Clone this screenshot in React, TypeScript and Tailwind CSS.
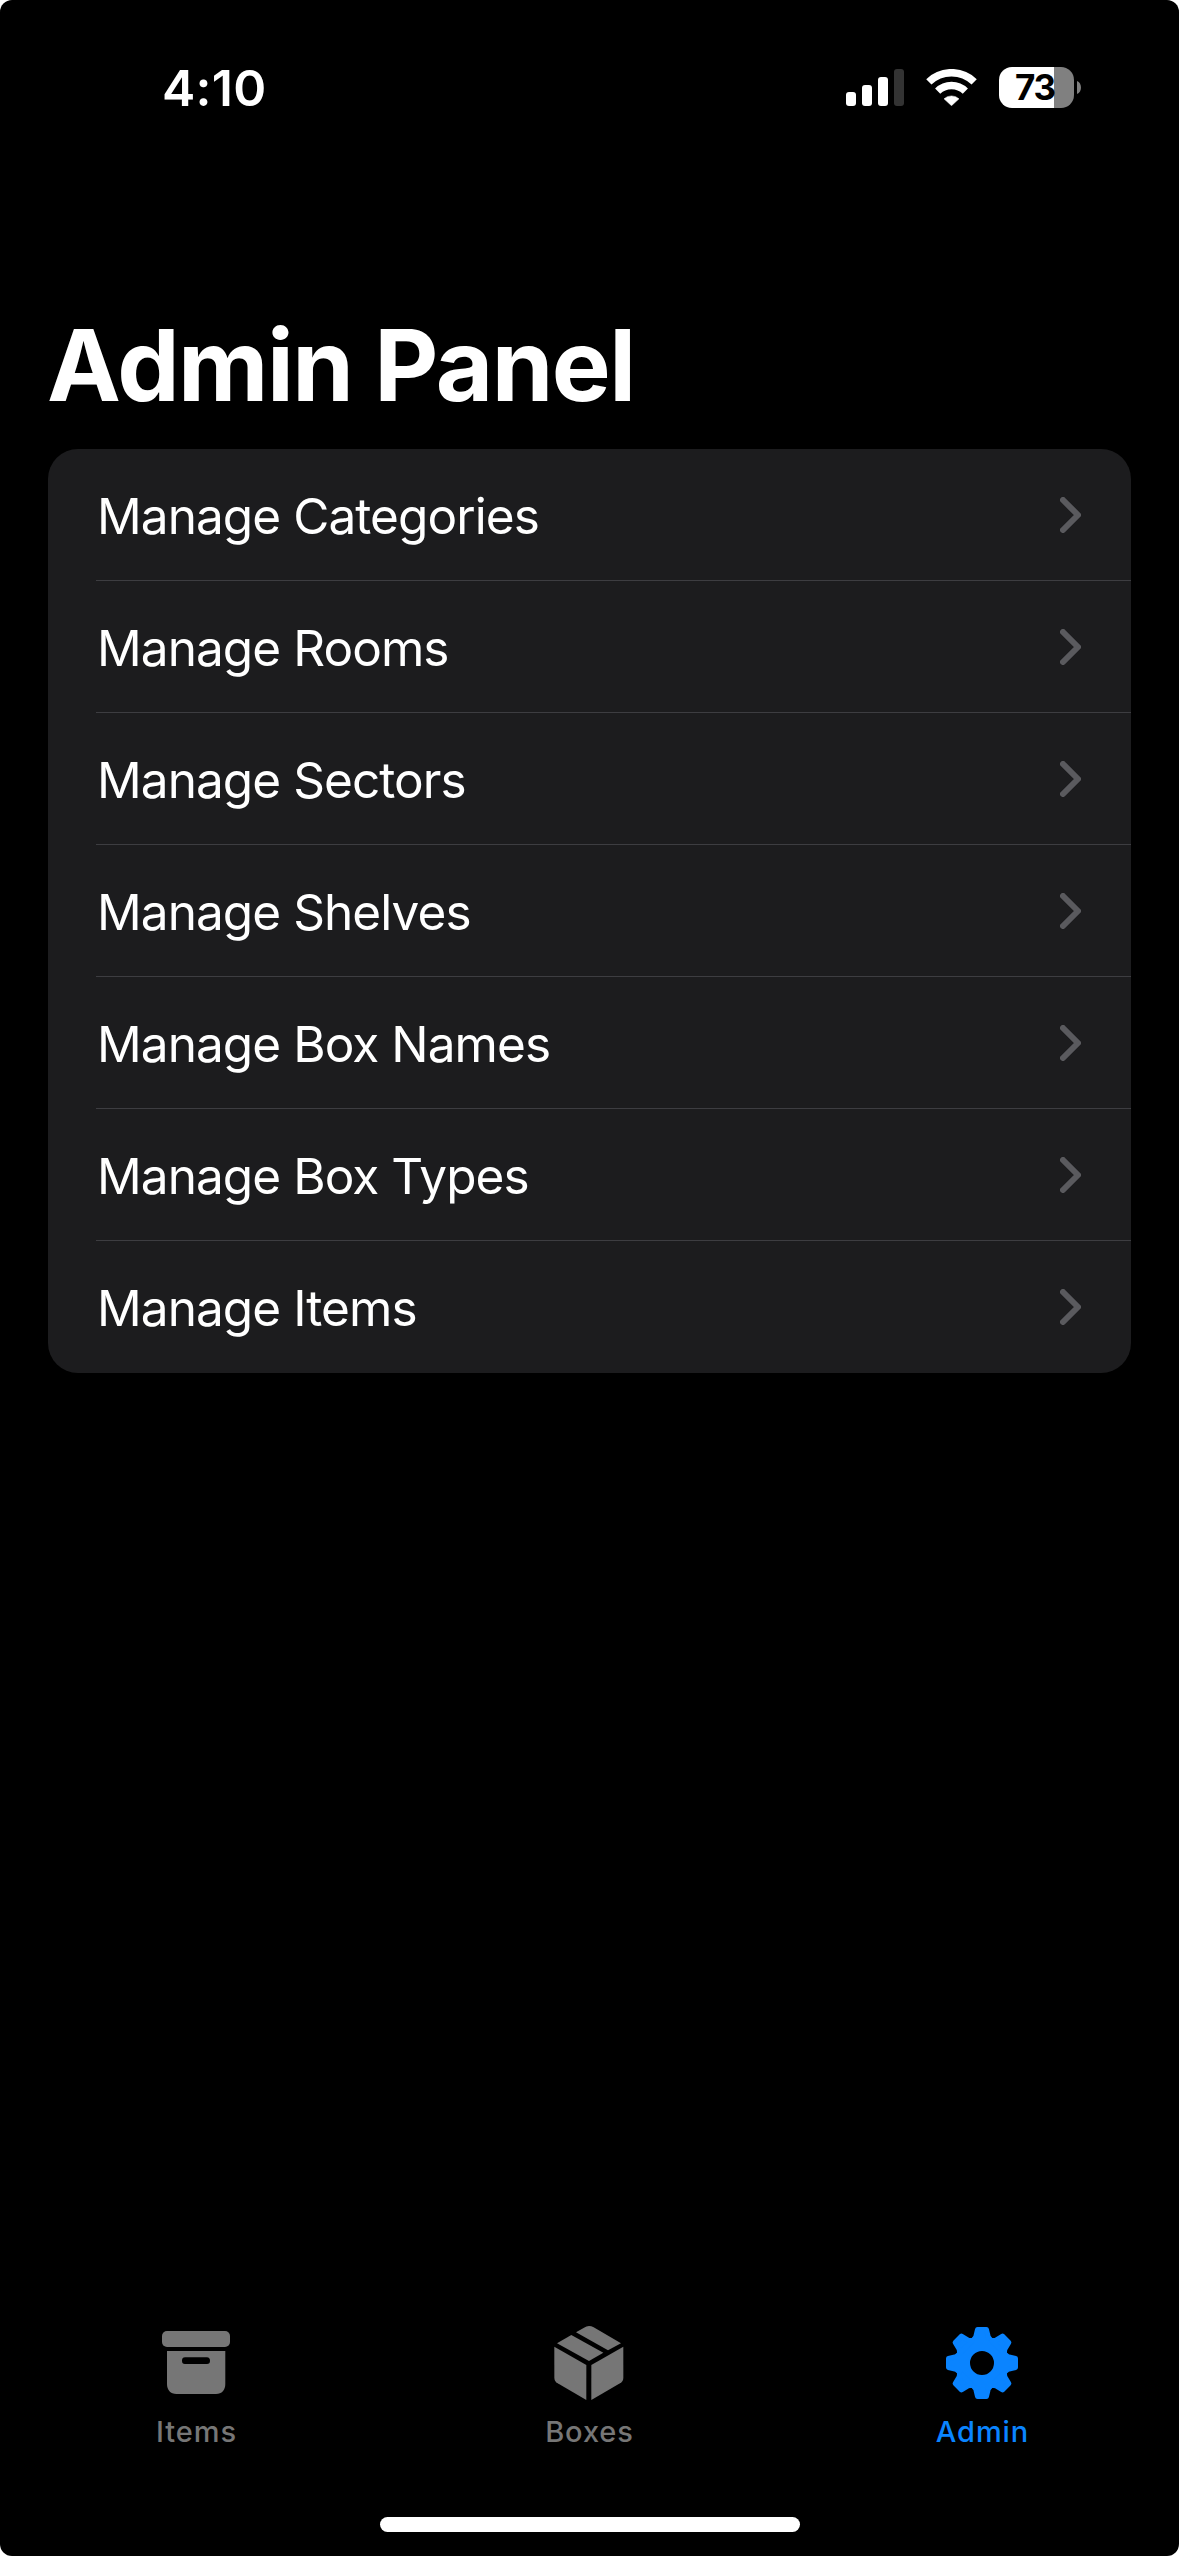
import type { ReactNode } from "react";

const menu = [
  "Manage Categories",
  "Manage Rooms",
  "Manage Sectors",
  "Manage Shelves",
  "Manage Box Names",
  "Manage Box Types",
  "Manage Items",
];

function SignalIcon() {
  return (
    <svg className="mt-[69px] h-[37px] w-[58px]" viewBox="0 0 58 37" fill="#fff">
      <rect x="0" y="23" width="10" height="14" rx="3" />
      <rect x="16" y="16" width="10" height="21" rx="3" />
      <rect x="32" y="8" width="10" height="29" rx="3" />
      <rect x="48" y="0" width="10" height="37" rx="3" fill="#333" />
    </svg>
  );
}

function WifiIcon() {
  return (
    <svg className="mt-[69px] ml-[22px] h-[37px] w-[51px]" viewBox="288 57 153 111" fill="none" stroke="#fff">
      <path d="M296.5 95.5A98 98 0 0 1 432.500 95.500" strokeWidth="22.500" />
      <path d="M323 123.500A59 59 0 0 1 406 123.500" strokeWidth="22" />
      <path d="M342 146.500A33 33 0 0 1 387 146.500L364.500 167Z" fill="#fff" strokeWidth="1.500" strokeLinejoin="round" />
    </svg>
  );
}

function Battery() {
  return (
    <div className="mt-[67px] ml-[22px] flex h-[41px] items-center">
      <div className="flex h-[41px] w-[75px] items-center justify-center rounded-[13px] bg-[linear-gradient(to_right,#fff_55px,#808080_55px)] pr-[3px] text-[35px] leading-[41px] font-bold tracking-[-1.3px] text-black">
        73
      </div>
      <svg className="ml-[3px] h-[13px] w-[4px]" viewBox="0 0 4 13">
        <path d="M0 0C5.300 2 5.300 11 0 13Z" fill="#808080" />
      </svg>
    </div>
  );
}

function Chevron() {
  return (
    <svg className="h-[36px] w-[21px]" viewBox="0 0 21 36" fill="none" stroke="#5a5a5e" strokeWidth="6" strokeLinecap="round" strokeLinejoin="round">
      <path d="M3 3L18 18L3 33" />
    </svg>
  );
}

function ArchiveIcon() {
  return (
    <svg className="h-[76px] w-[76px]" viewBox="0 0 76 76" fill="#767676">
      <rect x="4" y="6" width="68" height="16" rx="5" />
      <path
        fillRule="evenodd"
        d="M9 26H67.300V59C67.300 65 64 69 58 69H18.500C12.500 69 9 65 9 59ZM27 32.300Q24 32.300 24 35.700T27 39H49Q52 39 52 35.700T49 32.300Z"
      />
    </svg>
  );
}

function BoxIcon() {
  return (
    <svg className="h-[76px] w-[76px]" viewBox="62 45 228 228" fill="#767676">
      <path d="M72 110L168 165V270L82 220Q72 214 72 203Z" />
      <path d="M279 110L183 165V270L269 220Q279 214 279 203Z" />
      <path d="M80 100L123 75L219 128L176 153Z" />
      <path d="M137 67L161 53Q175 44 190 52L272 100L233 121Z" />
    </svg>
  );
}

function GearIcon() {
  return (
    <svg className="h-[76px] w-[76px]" viewBox="-38 -38 76 76" fill="#0a84ff" stroke="#0a84ff">
      <circle r="19.500" fill="none" strokeWidth="15" />
      {[0, 45, 90, 135, 180, 225, 270, 315].map((angle) => (
        <path
          key={angle}
          transform={`rotate(${angle})`}
          d="M-9 -22.500L-6.300 -26L-4.500 -33.500H4.500L6.300 -26L9 -22.500Z"
          strokeWidth="5"
          strokeLinejoin="round"
        />
      ))}
    </svg>
  );
}

function Tab({ label, active, children }: { label: string; active?: boolean; children: ReactNode }) {
  return (
    <div className={`flex flex-1 flex-col items-center ${active ? "text-[#0a84ff]" : "text-[#767676]"}`}>
      <div className="mr-[2px]">{children}</div>
      <span className="mt-[13px] text-[29px] leading-[36px] font-medium tracking-[0.9px]">{label}</span>
    </div>
  );
}

export default function App() {
  return (
    <div className="h-[2556px] w-[1179px] bg-white font-['Inter',sans-serif]">
      <div className="flex h-full flex-col overflow-hidden rounded-[12px] bg-black text-white">
        <header className="flex h-[310px] shrink-0 justify-between pr-[98px] pl-[162px]">
          <time className="mt-[58px] text-[50px] leading-[60px] font-semibold tracking-[0.3px]">4:10</time>
          <div className="flex items-start">
            <SignalIcon />
            <WifiIcon />
            <Battery />
          </div>
        </header>
        <h1 className="h-[139px] pt-[5px] pl-[47px] text-[99px] leading-[100px] font-bold tracking-[-1.5px]">Admin Panel</h1>
        <ul className="mx-[48px] overflow-hidden rounded-[30px] bg-[#1c1c1e]">
          {menu.map((label, i) => (
            <li
              key={label}
              className={`ml-[48px] flex h-[132px] items-center justify-between border-[#3d3d41] pr-[50px] text-[49.5px] ${i < menu.length - 1 ? "border-b" : ""}`}
            >
              <span className="mt-[3px] ml-[1px] tracking-[-0.93px]">{label}</span>
              <Chevron />
            </li>
          ))}
        </ul>
        <nav className="mt-auto flex h-[192px] shrink-0">
          <Tab label="Items"><ArchiveIcon /></Tab>
          <Tab label="Boxes"><BoxIcon /></Tab>
          <Tab label="Admin" active><GearIcon /></Tab>
        </nav>
        <div className="mb-[24px] ml-[380px] h-[15px] w-[420px] shrink-0 rounded-full bg-white" />
      </div>
    </div>
  );
}
